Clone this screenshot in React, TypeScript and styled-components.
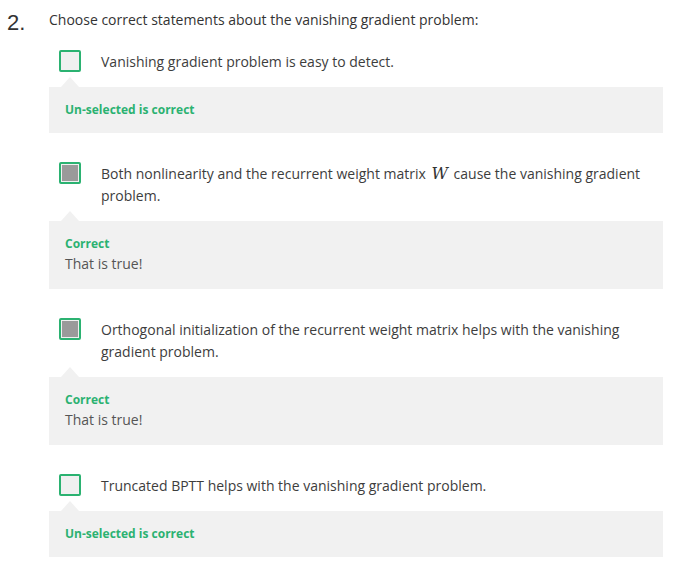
import styled, { createGlobalStyle } from "styled-components";

const GlobalStyle = createGlobalStyle`
  body {
    margin: 0;
    background: #ffffff;
    font-family: "Open Sans", "Noto Sans", sans-serif;
    color: #333333;
  }
`;

const SPage = styled.div`
  padding: 10px 0 0 0;
  width: 698px;
`;

const SQuestion = styled.div`
  display: flex;
  align-items: flex-start;
  height: 20px;
`;

const SNumber = styled.div`
  width: 42px;
  padding-left: 7px;
  margin-top: 2px;
  font-family: "Liberation Sans", Arial, sans-serif;
  font-size: 22px;
  line-height: 22px;
  color: #333333;
`;

const SPrompt = styled.div`
  font-size: 14px;
  line-height: 20px;
  color: #333333;
`;

const SOptions = styled.div`
  margin: 20px 0 0 49px;
  width: 614px;
  display: flex;
  flex-direction: column;
  gap: 29px;
`;

const SOptionRow = styled.div`
  display: flex;
  align-items: flex-start;
  gap: 20px;
  padding: 0 10px;
`;

const SCheckbox = styled.div`
  flex: none;
  box-sizing: border-box;
  width: 22px;
  height: 22px;
  padding: 1px;
  border: 2px solid #2bb271;
  border-radius: 2px;
  background: #f0f0f0;
`;

const SCheck = styled.div`
  width: 16px;
  height: 16px;
  background: #9a9a9a;
`;

const SOptionText = styled.div`
  padding-top: 1px;
  font-size: 14px;
  line-height: 22px;
  color: #3d3d3d;
`;

const SMath = styled.span`
  font-family: "DejaVu Serif", "Liberation Serif", serif;
  font-style: italic;
  font-weight: 300;
  font-size: 16px;
  line-height: 1;
  color: #333333;
  padding: 0 2px;
`;

const SFeedback = styled.div`
  position: relative;
  margin-top: 14px;
  padding: 14px 16px;
  background: #f1f1f1;

  &::before {
    content: "";
    position: absolute;
    top: -10px;
    left: 12px;
    border-left: 9px solid transparent;
    border-right: 9px solid transparent;
    border-bottom: 10px solid #f1f1f1;
  }
`;

const SVerdict = styled.div`
  font-size: 12px;
  line-height: 18px;
  font-weight: 700;
  color: #2bb271;
`;

const SExplanation = styled.div`
  font-size: 14px;
  line-height: 22px;
  color: #555555;
`;

type Option = {
  text: React.ReactNode;
  checked: boolean;
  verdict: string;
  explanation?: string;
};

const options: Option[] = [
  {
    text: "Vanishing gradient problem is easy to detect.",
    checked: false,
    verdict: "Un-selected is correct",
  },
  {
    text: (
      <>
        Both nonlinearity and the recurrent weight matrix <SMath>W</SMath> cause
        the vanishing gradient problem.
      </>
    ),
    checked: true,
    verdict: "Correct",
    explanation: "That is true!",
  },
  {
    text: "Orthogonal initialization of the recurrent weight matrix helps with the vanishing gradient problem.",
    checked: true,
    verdict: "Correct",
    explanation: "That is true!",
  },
  {
    text: "Truncated BPTT helps with the vanishing gradient problem.",
    checked: false,
    verdict: "Un-selected is correct",
  },
];

export default function App() {
  return (
    <SPage>
      <GlobalStyle />
      <SQuestion>
        <SNumber>2.</SNumber>
        <SPrompt>Choose correct statements about the vanishing gradient problem:</SPrompt>
      </SQuestion>
      <SOptions>
        {options.map((option, i) => (
          <div key={i}>
            <SOptionRow>
              <SCheckbox>{option.checked && <SCheck />}</SCheckbox>
              <SOptionText>{option.text}</SOptionText>
            </SOptionRow>
            <SFeedback>
              <SVerdict>{option.verdict}</SVerdict>
              {option.explanation && (
                <SExplanation>{option.explanation}</SExplanation>
              )}
            </SFeedback>
          </div>
        ))}
      </SOptions>
    </SPage>
  );
}
